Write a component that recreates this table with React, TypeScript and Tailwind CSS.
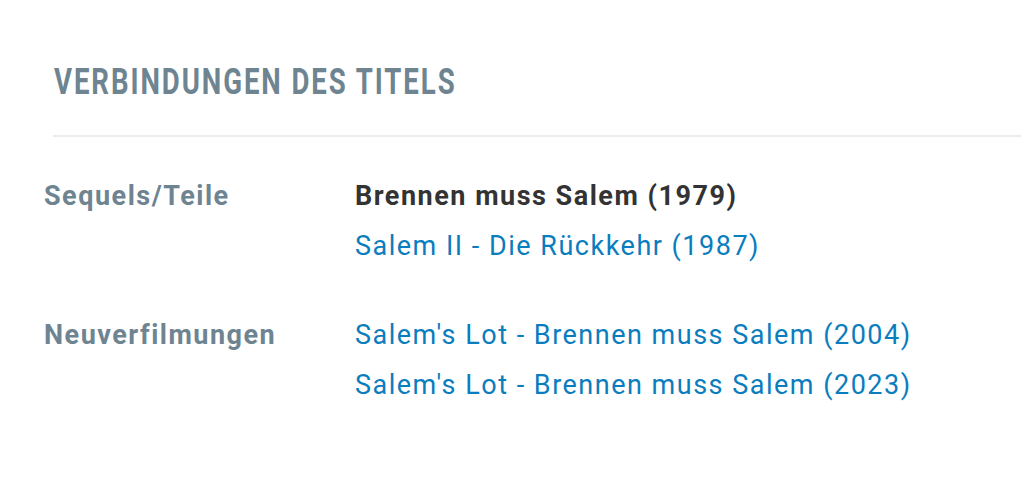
const groups = [
  {
    label: 'Sequels/Teile',
    items: [
      { title: 'Brennen muss Salem (1979)', link: false },
      { title: 'Salem II - Die Rückkehr (1987)', link: true },
    ],
  },
  {
    label: 'Neuverfilmungen',
    items: [
      { title: "Salem's Lot - Brennen muss Salem (2004)", link: true },
      { title: "Salem's Lot - Brennen muss Salem (2023)", link: true },
    ],
  },
]

export default function App() {
  return (
    <div className="w-[1021px] h-[491px] bg-white font-['Roboto',sans-serif] pl-[44px] pt-[63px] overflow-hidden">
      <h2 className="ml-[10px] text-[37px] leading-[38px] font-bold text-[#6e8491] uppercase tracking-[0.07em] origin-left scale-x-[0.745] whitespace-nowrap">
        Verbindungen des Titels
      </h2>
      <div className="ml-[9px] mt-[34px] h-[2px] bg-[#ececec]" />

      <div className="mt-[34px] flex flex-col gap-[39px]">
        {groups.map(group => (
          <div key={group.label} className="flex">
            <div className="w-[311px] shrink-0 text-[27px] leading-[50px] tracking-[1.5px] font-bold text-[#6e8491]">
              {group.label}
            </div>
            <ul className="flex flex-col">
              {group.items.map(item => (
                <li
                  key={item.title}
                  className={
                    item.link
                      ? 'text-[27px] leading-[50px] tracking-[1.5px] text-[#0a7dbe]'
                      : 'text-[27px] leading-[50px] tracking-[1.5px] font-bold text-[#333333]'
                  }
                >
                  {item.title}
                </li>
              ))}
            </ul>
          </div>
        ))}
      </div>
    </div>
  )
}
